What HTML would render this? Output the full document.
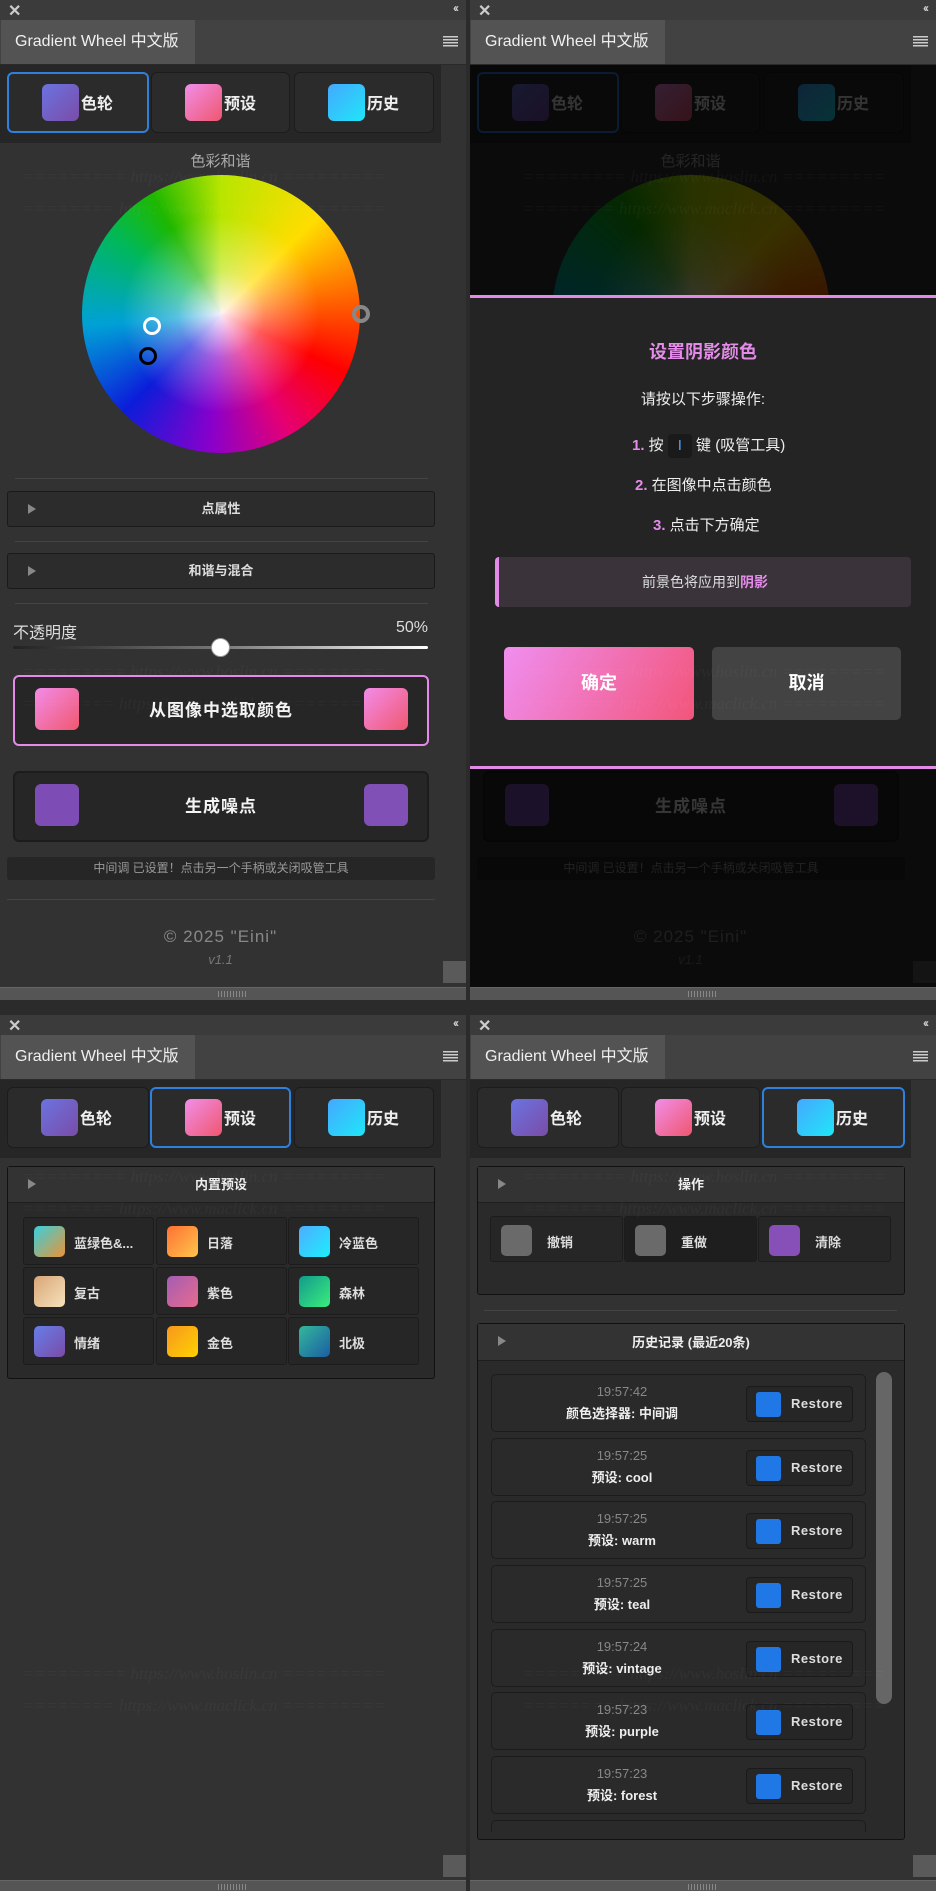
<!DOCTYPE html>
<html><head><meta charset="utf-8">
<style>
*{box-sizing:border-box;margin:0;padding:0}
body{width:936px;height:1891px;background:#2b2b2b;position:relative;overflow:hidden;font-family:"Liberation Sans","Noto Sans CJK SC",sans-serif;color:#ddd}
.p{position:absolute;width:466px;background:#323232;overflow:hidden}
.a{position:absolute}
.top{left:0;top:0;width:466px;height:20px;background:#3b3b3b}
.x{left:8px;top:1px;font-size:16px;font-weight:bold;color:#ccc}
.cc{right:9px;top:1px;font-size:12px;color:#ccc;letter-spacing:-2px;font-weight:bold}
.tabrow{left:0;top:20px;width:466px;height:45px;background:#424242;border-bottom:1px solid #2a2a2a}
.tab{left:1px;top:0;width:194px;height:44px;background:#535353;color:#f0f0f0;font-size:16px;line-height:44px;padding-left:14px}
.menu{right:8px;top:16px;width:15px;height:11px;background:repeating-linear-gradient(#ccc 0 1.5px,transparent 1.5px 3px)}
.nav{left:0;top:65px;width:441px;height:78px;background:#262626}
.nb{top:7px;height:61px;background:#2b2b2b;border:1px solid #1c1c1c;border-radius:6px;font-size:16px;font-weight:bold;color:#eee}
.nb.on{border:2px solid #2f80dd}
.nb .sw{position:absolute;top:11px;width:37px;height:37px;border-radius:6px}
.nb span{position:absolute;top:17px}
.c{text-align:center}
.sep{height:1px;background:#444;left:15px;width:413px}
.bar{left:7px;width:428px;height:36px;background:#2c2c2c;border:1px solid #1a1a1a;border-radius:3px;font-size:13px;font-weight:bold;line-height:34px;text-align:center;color:#ddd}
.tri{position:absolute;left:20px;top:12px;width:0;height:0;border-left:8px solid #888;border-top:5px solid transparent;border-bottom:5px solid transparent}
.big{left:13px;width:416px;height:71px;background:#262626;border-radius:6px;font-size:17px;font-weight:bold;color:#f4f4f4;text-align:center;line-height:68px;letter-spacing:1px}
.big .sw{position:absolute;top:11px;width:44px;height:42px;border-radius:6px}
.wm{font-family:"Liberation Serif",serif;font-style:italic;font-size:17px;color:rgba(255,255,255,.035);white-space:nowrap;left:23px;width:405px;overflow:hidden}
.grip{left:0;width:466px;height:13px;background:#555;border-top:1px solid #666}
.grip i{position:absolute;left:218px;top:3px;width:30px;height:6px;background:repeating-linear-gradient(90deg,#888 0 1px,transparent 1px 3px)}
.sq{width:23px;height:22px;background:#5a5a5a;left:443px}
.sec{left:7px;width:428px;background:#2a2a2a;border:1px solid #111;border-radius:3px}
.sech{left:0;top:0;width:100%;height:36px;background:#333;border-bottom:1px solid #1e1e1e;font-size:13px;font-weight:bold;text-align:center;line-height:36px;color:#eee}
.gi{width:131px;height:48px;background:#262626;border:1px solid #1c1c1c;border-radius:3px;font-size:13px;color:#ddd}
.gi b{position:absolute;left:10px;top:8px;width:31px;height:31px;border-radius:5px}
.gi span{position:absolute;left:50px;top:15px;font-weight:bold}
.hi{left:13px;width:375px;height:58px;background:#2a2a2a;border:1px solid #1c1c1c;border-radius:5px}
.hi .t{position:absolute;left:0;width:260px;top:9px;text-align:center;font-size:13px;color:#888}
.hi .l{position:absolute;left:0;width:260px;top:28px;text-align:center;font-size:13px;font-weight:bold;color:#eee}
.hi .r{position:absolute;left:254px;top:11px;width:107px;height:36px;background:#262626;border:1px solid #1a1a1a;border-radius:4px}
.hi .r b{position:absolute;left:9px;top:5px;width:25px;height:25px;background:#1f78e6;border-radius:3px}
.hi .r span{position:absolute;left:44px;top:9px;font-size:13px;font-weight:bold;color:#ddd;letter-spacing:.5px}
.wheel{left:82px;top:175px;width:278px;height:278px;border-radius:50%;background:radial-gradient(circle,rgba(255,245,255,.95) 0,rgba(255,255,255,.35) 22%,rgba(255,255,255,0) 50%),conic-gradient(from 0deg,hsl(72,100%,45%) 0deg,hsl(52,100%,50%) 45deg,hsl(22,100%,50%) 85deg,hsl(0,100%,50%) 115deg,hsl(330,100%,45%) 150deg,hsl(280,100%,40%) 185deg,hsl(235,90%,45%) 225deg,hsl(195,100%,42%) 265deg,hsl(150,100%,36%) 305deg,hsl(110,100%,36%) 330deg,hsl(72,100%,45%) 360deg)}
</style></head><body>

<!-- PANEL 1 -->
<div class="p" style="left:0;top:0;height:1010px">
<div class="a top"></div><div class="a x">✕</div><div class="a cc">‹‹</div>
<div class="a tabrow"><div class="a tab">Gradient Wheel 中文版</div><div class="a menu"></div></div>
<div class="a nav"></div>
<div class="a nb on" style="left:7px;top:72px;width:142px"><div class="sw" style="left:33px;top:10px;background:linear-gradient(135deg,#6b73e0,#7a4ca8)"></div><span style="left:72px;top:16px">色轮</span></div>
<div class="a nb" style="left:151px;top:72px;width:139px"><div class="sw" style="left:33px;background:linear-gradient(135deg,#f18ee8,#f0566f)"></div><span style="left:72px">预设</span></div>
<div class="a nb" style="left:294px;top:72px;width:140px"><div class="sw" style="left:33px;background:linear-gradient(135deg,#45a8ff,#1fe6f8)"></div><span style="left:72px">历史</span></div>
<div class="a c" style="left:0;width:441px;top:150px;font-size:15px;color:#aaa">色彩和谐</div>
<div class="a wheel"></div>
<div class="wm a" style="top:167px">========= https://www.hoslin.cn =========</div>
<div class="wm a" style="top:199px">======== https://www.maclick.cn =========</div>
<div class="a" style="left:143px;top:317px;width:18px;height:18px;border:3px solid #fff;border-radius:50%"></div>
<div class="a" style="left:139px;top:347px;width:18px;height:18px;border:3px solid #000;border-radius:50%"></div>
<div class="a" style="left:352px;top:305px;width:18px;height:18px;border:4px solid #888;border-radius:50%"></div>
<div class="a sep" style="top:478px"></div>
<div class="a bar" style="top:491px"><i class="tri"></i>点属性</div>
<div class="a sep" style="top:541px"></div>
<div class="a bar" style="top:553px"><i class="tri"></i>和谐与混合</div>
<div class="a sep" style="top:603px"></div>
<div class="a" style="left:13px;top:619px;font-size:16px;color:#ddd">不透明度</div>
<div class="a" style="right:38px;top:619px;font-size:16px;color:#ddd">50%</div>
<div class="a" style="left:13px;top:646px;width:415px;height:3px;border-radius:2px;background:linear-gradient(90deg,#222,#777 50%,#fff)"></div>
<div class="a" style="left:211px;top:638px;width:19px;height:19px;border-radius:50%;background:#fff;border:1px solid #999"></div>
<div class="wm a" style="top:662px">========= https://www.hoslin.cn =========</div>
<div class="a big" style="top:675px;border:2px solid #e58ae9"><div class="sw" style="left:20px;background:linear-gradient(135deg,#f38be9,#f0586f)"></div>从图像中选取颜色<div class="sw" style="left:349px;background:linear-gradient(135deg,#f38be9,#f0586f)"></div></div>
<div class="wm a" style="top:694px">======== https://www.maclick.cn =========</div>
<div class="a big" style="top:771px;border:2px solid #1c1c1c"><div class="sw" style="left:20px;background:#7d4db5"></div>生成噪点<div class="sw" style="left:349px;background:#8050b6"></div></div>
<div class="a c" style="left:7px;top:857px;width:428px;height:23px;background:#262626;border-radius:3px;font-size:12px;line-height:23px;color:#999">中间调 已设置！点击另一个手柄或关闭吸管工具</div>
<div class="a sep" style="left:7px;width:428px;top:899px"></div>
<div class="a c" style="left:0;width:441px;top:927px;font-size:17px;color:#888;letter-spacing:1px">© 2025 "Eini"</div>
<div class="a c" style="left:0;width:441px;top:952px;font-size:13px;font-style:italic;color:#777">v1.1</div>
<div class="a sq" style="top:961px"></div>
<div class="a grip" style="top:987px"><i></i></div>
<div class="a" style="left:0;top:1000px;width:466px;height:10px;background:#2b2b2b"></div>
</div>

<!-- PANEL 2 -->
<div class="p" style="left:470px;top:0;height:1010px">
<div class="a top"></div><div class="a x">✕</div><div class="a cc">‹‹</div>
<div class="a tabrow"><div class="a tab">Gradient Wheel 中文版</div><div class="a menu"></div></div>
<div class="a nav"></div>
<div class="a nb on" style="left:7px;top:72px;width:142px"><div class="sw" style="left:33px;top:10px;background:linear-gradient(135deg,#6b73e0,#7a4ca8)"></div><span style="left:72px;top:16px">色轮</span></div>
<div class="a nb" style="left:151px;top:72px;width:139px"><div class="sw" style="left:33px;background:linear-gradient(135deg,#f18ee8,#f0566f)"></div><span style="left:72px">预设</span></div>
<div class="a nb" style="left:294px;top:72px;width:140px"><div class="sw" style="left:33px;background:linear-gradient(135deg,#45a8ff,#1fe6f8)"></div><span style="left:72px">历史</span></div>
<div class="a c" style="left:0;width:441px;top:150px;font-size:15px;color:#aaa">色彩和谐</div>
<div class="a wheel"></div>
<div class="a big" style="top:771px;border:2px solid #1c1c1c"><div class="sw" style="left:20px;background:#7d4db5"></div>生成噪点<div class="sw" style="left:349px;background:#8050b6"></div></div>
<div class="a c" style="left:7px;top:857px;width:428px;height:23px;background:#262626;border-radius:3px;font-size:12px;line-height:23px;color:#999">中间调 已设置！点击另一个手柄或关闭吸管工具</div>
<div class="a c" style="left:0;width:441px;top:927px;font-size:17px;color:#888;letter-spacing:1px">© 2025 "Eini"</div>
<div class="a c" style="left:0;width:441px;top:952px;font-size:13px;font-style:italic;color:#777">v1.1</div>
<div class="a sq" style="top:961px"></div>
<div class="a" style="left:0;top:65px;width:466px;height:922px;background:rgba(0,0,0,.78)"></div>
<div class="wm a" style="top:167px;left:53px">========= https://www.hoslin.cn =========</div>
<div class="wm a" style="top:199px;left:53px">======== https://www.maclick.cn =========</div>
<div class="a" style="left:0;top:295px;width:466px;height:474px;background:#242424;border-top:3px solid #e38ae7;border-bottom:3px solid #e38ae7"></div>
<div class="a c" style="left:0;width:466px;top:338px;font-size:18px;font-weight:bold;color:#e48be9">设置阴影颜色</div>
<div class="a c" style="left:0;width:466px;top:388px;font-size:15px;color:#eee">请按以下步骤操作:</div>
<div class="a" style="left:162px;top:434px;font-size:15px;color:#eee"><b style="color:#e48be9">1.</b> 按 <span style="display:inline-block;width:24px;height:24px;background:#1a1a1a;border-radius:4px;text-align:center;color:#4aa3ff;vertical-align:middle;line-height:24px">I</span> 键 (吸管工具)</div>
<div class="a" style="left:165px;top:474px;font-size:15px;color:#eee"><b style="color:#e48be9">2.</b> 在图像中点击颜色</div>
<div class="a" style="left:183px;top:514px;font-size:15px;color:#eee"><b style="color:#e48be9">3.</b> 点击下方确定</div>
<div class="a c" style="left:25px;top:557px;width:416px;height:50px;background:#3a333a;border-left:4px solid #e48be9;border-radius:4px;font-size:14px;line-height:50px;color:#ddd">前景色将应用到<b style="color:#e48be9">阴影</b></div>
<div class="a c" style="left:34px;top:647px;width:190px;height:73px;background:linear-gradient(120deg,#f08ef0,#f2557a);border-radius:5px;font-size:18px;font-weight:bold;line-height:73px;color:#fff">确定</div>
<div class="a c" style="left:242px;top:647px;width:189px;height:73px;background:#434343;border-radius:5px;font-size:18px;font-weight:bold;line-height:73px;color:#fff">取消</div>
<div class="wm a" style="top:662px;left:53px">========= https://www.hoslin.cn =========</div>
<div class="wm a" style="top:694px;left:53px">======== https://www.maclick.cn =========</div>
<div class="a grip" style="top:987px"><i></i></div>
<div class="a" style="left:0;top:1000px;width:466px;height:10px;background:#2b2b2b"></div>
</div>

<!-- PANEL 3 -->
<div class="p" style="left:0;top:1015px;height:876px">
<div class="a top"></div><div class="a x">✕</div><div class="a cc">‹‹</div>
<div class="a tabrow"><div class="a tab">Gradient Wheel 中文版</div><div class="a menu"></div></div>
<div class="a nav"></div>
<div class="a nb" style="left:7px;top:72px;width:142px"><div class="sw" style="left:33px;background:linear-gradient(135deg,#6b73e0,#7a4ca8)"></div><span style="left:72px">色轮</span></div>
<div class="a nb on" style="left:150px;top:72px;width:141px"><div class="sw" style="left:33px;top:10px;background:linear-gradient(135deg,#f18ee8,#f0566f)"></div><span style="left:72px;top:16px">预设</span></div>
<div class="a nb" style="left:294px;top:72px;width:140px"><div class="sw" style="left:33px;background:linear-gradient(135deg,#45a8ff,#1fe6f8)"></div><span style="left:72px">历史</span></div>
<div class="a sec" style="top:151px;height:213px"><div class="a sech"><i class="tri"></i>内置预设</div></div>
<div class="a gi" style="left:23px;top:202px"><b style="background:linear-gradient(135deg,#37cfe0,#eb9434)"></b><span>蓝绿色&amp;...</span></div>
<div class="a gi" style="left:156px;top:202px"><b style="background:linear-gradient(135deg,#ff7033,#ffc64c)"></b><span>日落</span></div>
<div class="a gi" style="left:288px;top:202px"><b style="background:linear-gradient(135deg,#4facfe,#1ceefe)"></b><span>冷蓝色</span></div>
<div class="a gi" style="left:23px;top:252px"><b style="background:linear-gradient(135deg,#d8a577,#f6e3bc)"></b><span>复古</span></div>
<div class="a gi" style="left:156px;top:252px"><b style="background:linear-gradient(135deg,#a45db2,#e76b8f)"></b><span>紫色</span></div>
<div class="a gi" style="left:288px;top:252px"><b style="background:linear-gradient(135deg,#129a8d,#3aee7c)"></b><span>森林</span></div>
<div class="a gi" style="left:23px;top:302px"><b style="background:linear-gradient(135deg,#667eea,#7a4ba6)"></b><span>情绪</span></div>
<div class="a gi" style="left:156px;top:302px"><b style="background:linear-gradient(135deg,#f7971e,#ffd200)"></b><span>金色</span></div>
<div class="a gi" style="left:288px;top:302px"><b style="background:linear-gradient(135deg,#33b89b,#1b5da3)"></b><span>北极</span></div>
<div class="wm a" style="top:152px">========= https://www.hoslin.cn =========</div>
<div class="wm a" style="top:184px">======== https://www.maclick.cn =========</div>
<div class="wm a" style="top:649px">========= https://www.hoslin.cn =========</div>
<div class="wm a" style="top:681px">======== https://www.maclick.cn =========</div>
<div class="a sq" style="top:840px"></div>
<div class="a grip" style="top:865px;height:11px"><i></i></div>
</div>

<!-- PANEL 4 -->
<div class="p" style="left:470px;top:1015px;height:876px">
<div class="a top"></div><div class="a x">✕</div><div class="a cc">‹‹</div>
<div class="a tabrow"><div class="a tab">Gradient Wheel 中文版</div><div class="a menu"></div></div>
<div class="a nav"></div>
<div class="a nb" style="left:7px;top:72px;width:142px"><div class="sw" style="left:33px;background:linear-gradient(135deg,#6b73e0,#7a4ca8)"></div><span style="left:72px">色轮</span></div>
<div class="a nb" style="left:151px;top:72px;width:139px"><div class="sw" style="left:33px;background:linear-gradient(135deg,#f18ee8,#f0566f)"></div><span style="left:72px">预设</span></div>
<div class="a nb on" style="left:292px;top:72px;width:143px"><div class="sw" style="left:33px;top:10px;background:linear-gradient(135deg,#45a8ff,#1fe6f8)"></div><span style="left:72px;top:16px">历史</span></div>
<div class="a sec" style="top:151px;height:129px"><div class="a sech"><i class="tri"></i>操作</div></div>
<div class="a gi" style="left:20px;top:201px;width:133px;height:46px"><b style="background:#6a6a6a"></b><span style="left:56px">撤销</span></div>
<div class="a gi" style="left:154px;top:201px;width:133px;height:46px;background:#1e1e1e"><b style="background:#6a6a6a"></b><span style="left:56px">重做</span></div>
<div class="a gi" style="left:288px;top:201px;width:133px;height:46px"><b style="background:#8650b8"></b><span style="left:56px">清除</span></div>
<div class="a sep" style="left:14px;top:295px"></div>
<div class="a sec" style="top:308px;height:517px"><div class="a sech" style="height:37px;line-height:37px"><i class="tri"></i>历史记录 (最近20条)</div>
<div class="a" style="left:0;top:38px;width:426px;height:470px;overflow:hidden">
<div class="a hi" style="top:12px"><div class="t">19:57:42</div><div class="l">颜色选择器: 中间调</div><div class="r"><b></b><span>Restore</span></div></div>
<div class="a hi" style="top:76px"><div class="t">19:57:25</div><div class="l">预设: cool</div><div class="r"><b></b><span>Restore</span></div></div>
<div class="a hi" style="top:139px"><div class="t">19:57:25</div><div class="l">预设: warm</div><div class="r"><b></b><span>Restore</span></div></div>
<div class="a hi" style="top:203px"><div class="t">19:57:25</div><div class="l">预设: teal</div><div class="r"><b></b><span>Restore</span></div></div>
<div class="a hi" style="top:267px"><div class="t">19:57:24</div><div class="l">预设: vintage</div><div class="r"><b></b><span>Restore</span></div></div>
<div class="a hi" style="top:330px"><div class="t">19:57:23</div><div class="l">预设: purple</div><div class="r"><b></b><span>Restore</span></div></div>
<div class="a hi" style="top:394px"><div class="t">19:57:23</div><div class="l">预设: forest</div><div class="r"><b></b><span>Restore</span></div></div>
<div class="a hi" style="top:458px"><div class="r"></div></div>
<div class="a" style="left:398px;top:10px;width:16px;height:332px;border-radius:8px;background:#666"></div>
</div></div>
<div class="wm a" style="top:152px;left:53px">========= https://www.hoslin.cn =========</div>
<div class="wm a" style="top:184px;left:53px">======== https://www.maclick.cn =========</div>
<div class="wm a" style="top:649px;left:53px">========= https://www.hoslin.cn =========</div>
<div class="wm a" style="top:681px;left:53px">======== https://www.maclick.cn =========</div>
<div class="a sq" style="top:840px"></div>
<div class="a grip" style="top:865px;height:11px"><i></i></div>
</div>
</body></html>
